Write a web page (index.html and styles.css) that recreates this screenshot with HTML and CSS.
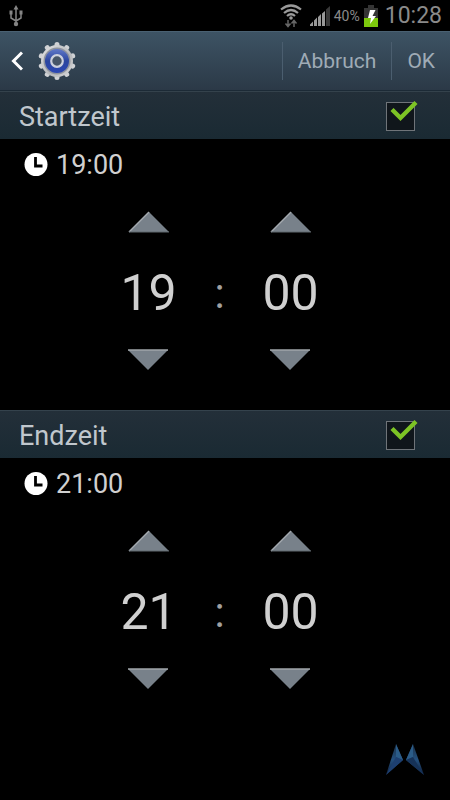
FILE: index.html
```
<!DOCTYPE html>
<html lang="de">
<head>
<meta charset="utf-8">
<meta name="viewport" content="width=device-width, initial-scale=1">
<title>Zeit einstellen</title>
<link rel="stylesheet" href="styles.css">
</head>
<body>
<svg class="defs" aria-hidden="true">
  <defs>
    <linearGradient id="ring" x1="0" y1="0" x2="0" y2="1"><stop offset="0" stop-color="#6078c8"/><stop offset=".5" stop-color="#2c469f"/><stop offset="1" stop-color="#2b47b4"/></linearGradient>
    <linearGradient id="metal" x1="0" y1="0" x2="1" y2="1"><stop offset="0" stop-color="#e4e4e4"/><stop offset=".6" stop-color="#b6b8bb"/><stop offset="1" stop-color="#d8d8d8"/></linearGradient>
    <linearGradient id="wing" x1="0" y1="0" x2="0" y2="1"><stop offset="0" stop-color="#1a3048"/><stop offset=".5" stop-color="#24507e"/><stop offset="1" stop-color="#10203c"/></linearGradient>
    <symbol id="up" viewBox="0 0 42 22"><path d="M1 21 21 1 41 21Z" fill="#78818a"/><path d="M1 21 21 1" stroke="#a4aaaf" stroke-width="1.5"/><path d="M1 21H41" stroke="#60686f"/></symbol>
    <symbol id="down" viewBox="0 0 42 22"><path d="M0 1H40L20 21Z" fill="#78818a"/><path d="M0 1H40" stroke="#a0a6aa" stroke-width="1.5"/></symbol>
    <symbol id="tick" viewBox="0 0 32 26"><path d="m6 10.500 8.500 8.500L30 3.500" fill="none" stroke="#7dc425" stroke-width="4.400"/></symbol>
    <symbol id="clock" viewBox="0 0 24 24"><circle cx="12" cy="11.500" r="11.500" fill="#fff"/><path d="M11.500 4v9H18.500" fill="none" stroke="#000" stroke-width="2.800"/></symbol>
  </defs>
</svg>
<div class="screen">
  <div class="status">
    <svg class="usb" viewBox="0 0 16 22" aria-label="USB"><g fill="none" stroke="#858585" stroke-width="1.500"><path d="M8 4v15M8 16l-5-3V8M8 16l5-3V8"/></g><path d="M8 0l2.500 4.500h-5zM1.500 5.500h3v4h-3zM11.500 5.500h3v4h-3z" fill="#858585"/><circle cx="8" cy="19" r="2.200" fill="#858585"/></svg>
    <svg class="wifi" viewBox="0 0 22 24" aria-label="WLAN"><g fill="none" stroke="#9a9a9a" stroke-width="2.200"><path d="M1 5.500Q11-2.500 21 5.500M4 9Q11 3 18 9M7 12Q11 8.500 15 12"/></g><circle cx="11" cy="14" r="1.800" fill="#9a9a9a"/><path d="M8 16v6M5.500 19.500 8 22.500l2.500-3M14 23v-6M11.500 19.500 14 16.500l2.500 3" fill="none" stroke="#666" stroke-width="1.500"/></svg>
    <svg class="signal" viewBox="0 0 20 20" aria-label="Signal"><path d="M0 20V18.500L3 15.500V20ZM4 20V14.500L7 11.500V20ZM8 20V11L11 8V20ZM12 20V7.500L15 5V20Z" fill="#999"/><path d="M16 20V3.500L20 0V20Z" fill="#393939"/></svg>
    <span class="percent">40%</span>
    <svg class="battery" viewBox="0 0 14 22" aria-label="Akku"><path d="M4 0h6v3h4v10H0V3h4z" fill="#353535"/><path d="M0 13h14v9H0z" fill="#7cc80d"/><path d="m6 5-2 8h3l-1 6 6-8H8.500l3-6z" fill="#fff"/></svg>
    <span class="now">10:28</span>
  </div>
  <header class="bar">
    <button class="back" type="button" aria-label="Zurück">
      <svg class="chevron" viewBox="0 0 12 20"><path d="M11 1.500 2.500 10l8.500 8.500" fill="none" stroke="#fff" stroke-width="3"/></svg>
      <svg class="gear" viewBox="0 0 40 40">
        <g stroke="#d0d2d5" stroke-width="5" stroke-linecap="round"><path d="M20 3.500V36.500M20 3.500V36.500" id="spoke"/><path d="M20 3.500V36.500" transform="rotate(36 20 20)"/><path d="M20 3.500V36.500" transform="rotate(72 20 20)"/><path d="M20 3.500V36.500" transform="rotate(108 20 20)"/><path d="M20 3.500V36.500" transform="rotate(144 20 20)"/></g>
        <circle cx="20" cy="20" r="16" fill="url(#metal)"/><circle cx="20" cy="20" r="13.500" fill="#8f949e"/><circle cx="20" cy="20" r="12" fill="url(#ring)"/><circle cx="20" cy="20" r="5.800" fill="#465568" stroke="#ccd0dd" stroke-width="2.200"/>
      </svg>
    </button>
    <button class="action cancel" type="button">Abbruch</button>
    <button class="action ok" type="button">OK</button>
  </header>
  <main>
    <section class="block">
      <div class="heading">
        <label for="start">Startzeit</label>
        <span class="check"><input type="checkbox" id="start" checked><svg class="tick"><use href="#tick"/></svg></span>
      </div>
      <div class="summary"><svg class="clock"><use href="#clock"/></svg><span>19:00</span></div>
      <div class="picker">
        <button class="step" type="button" aria-label="Stunde später"><svg><use href="#up"/></svg></button><span></span><button class="step" type="button" aria-label="Minute später"><svg><use href="#up"/></svg></button>
        <input class="value" type="text" inputmode="numeric" aria-label="Startstunde" value="19"><span class="colon">:</span><input class="value" type="text" inputmode="numeric" aria-label="Startminute" value="00">
        <button class="step" type="button" aria-label="Stunde früher"><svg><use href="#down"/></svg></button><span></span><button class="step" type="button" aria-label="Minute früher"><svg><use href="#down"/></svg></button>
      </div>
    </section>
    <section class="block">
      <div class="heading">
        <label for="end">Endzeit</label>
        <span class="check"><input type="checkbox" id="end" checked><svg class="tick"><use href="#tick"/></svg></span>
      </div>
      <div class="summary"><svg class="clock"><use href="#clock"/></svg><span>21:00</span></div>
      <div class="picker">
        <button class="step" type="button" aria-label="Stunde später"><svg><use href="#up"/></svg></button><span></span><button class="step" type="button" aria-label="Minute später"><svg><use href="#up"/></svg></button>
        <input class="value" type="text" inputmode="numeric" aria-label="Endstunde" value="21"><span class="colon">:</span><input class="value" type="text" inputmode="numeric" aria-label="Endminute" value="00">
        <button class="step" type="button" aria-label="Stunde früher"><svg><use href="#down"/></svg></button><span></span><button class="step" type="button" aria-label="Minute früher"><svg><use href="#down"/></svg></button>
      </div>
    </section>
  </main>
  <svg class="mark" viewBox="0 0 40 34" aria-hidden="true"><path d="M11 1 18 17 1 32Z" fill="url(#wing)"/><path d="M11 1 11 14 18 17Z" fill="#2b5c88"/><path d="M11 14 18 17 1 32Z" fill="#1d3f70"/><path d="M28 1 21 17 39 32Z" fill="url(#wing)"/><path d="M28 1 28 14 21 17Z" fill="#2b5c88"/><path d="M28 14 21 17 39 32Z" fill="#163258"/></svg>
</div>
</body>
</html>
```
FILE: styles.css
```
* { box-sizing: border-box; }

body {
  margin: 0;
  background: #000;
  color: #d0d0d0;
  font-family: Roboto, "Liberation Sans", sans-serif;
}

button, input {
  margin: 0;
  padding: 0;
  border: 0;
  background: none;
  color: inherit;
  font: inherit;
}

svg { display: block; }
.defs { position: absolute; width: 0; height: 0; }

.screen {
  display: flex;
  flex-direction: column;
  min-height: 100vh;
}

.status {
  display: flex;
  align-items: center;
  height: 31px;
  padding: 0 8px;
  color: #8a8a8a;
}
.usb { width: 16px; height: 22px; }
.wifi { width: 22px; height: 24px; margin-left: auto; }
.signal { width: 20px; height: 20px; margin: 0 4px 0 8px; }
.percent { font-size: 14px; }
.battery { width: 14px; height: 22px; margin: 0 7px 0 4px; }
.now { font-size: 23px; }

.bar {
  display: flex;
  align-items: center;
  height: 60px;
  border-top: 1px solid #4a6172;
  border-bottom: 1px solid #1c2a36;
  background: linear-gradient(#3d5364, #2b3947);
}
.back {
  display: flex;
  align-items: center;
  gap: 14px;
  margin-right: auto;
  padding-left: 11px;
}
.chevron { width: 12px; height: 20px; }
.gear { width: 40px; height: 40px; }
.action {
  height: 38px;
  padding: 0 15px;
  border-left: 1px solid #4b5e6f;
  color: #9fabb6;
  font-size: 21px;
}

.block { height: 319px; }

.heading {
  display: flex;
  align-items: center;
  justify-content: space-between;
  height: 48px;
  padding: 2px 35px 0 19px;
  border-top: 1px solid #34424c;
  background: linear-gradient(#232f39, #1a2a33);
  color: #c0c7cd;
  font-size: 27px;
}
.check { position: relative; }
.check input {
  display: block;
  width: 29px;
  height: 29px;
  appearance: none;
  border: 1px solid #6f7479;
  background: #10161b;
}
.tick {
  position: absolute;
  top: -3px;
  left: 0;
  width: 32px;
  height: 26px;
  pointer-events: none;
}
.check input:not(:checked) + .tick { display: none; }

.summary {
  display: flex;
  align-items: center;
  gap: 8px;
  height: 52px;
  padding-left: 24px;
  font-size: 27px;
}
.clock { width: 24px; height: 24px; }

.picker {
  display: grid;
  grid-template-columns: 80px 62px 80px;
  grid-template-rows: 62px 80px 54px;
  justify-content: center;
  align-items: center;
  padding-right: 11px;
}
.step {
  display: grid;
  place-items: center;
  height: 54px;
}
.step svg { width: 42px; height: 22px; }
.value {
  width: 100%;
  height: 60px;
  text-align: center;
  font-size: 50px;
}
.colon {
  text-align: center;
  color: #a0a0a0;
  font-size: 42px;
}

.mark {
  width: 40px;
  height: 34px;
  margin: auto 25px 23px auto;
}
```
